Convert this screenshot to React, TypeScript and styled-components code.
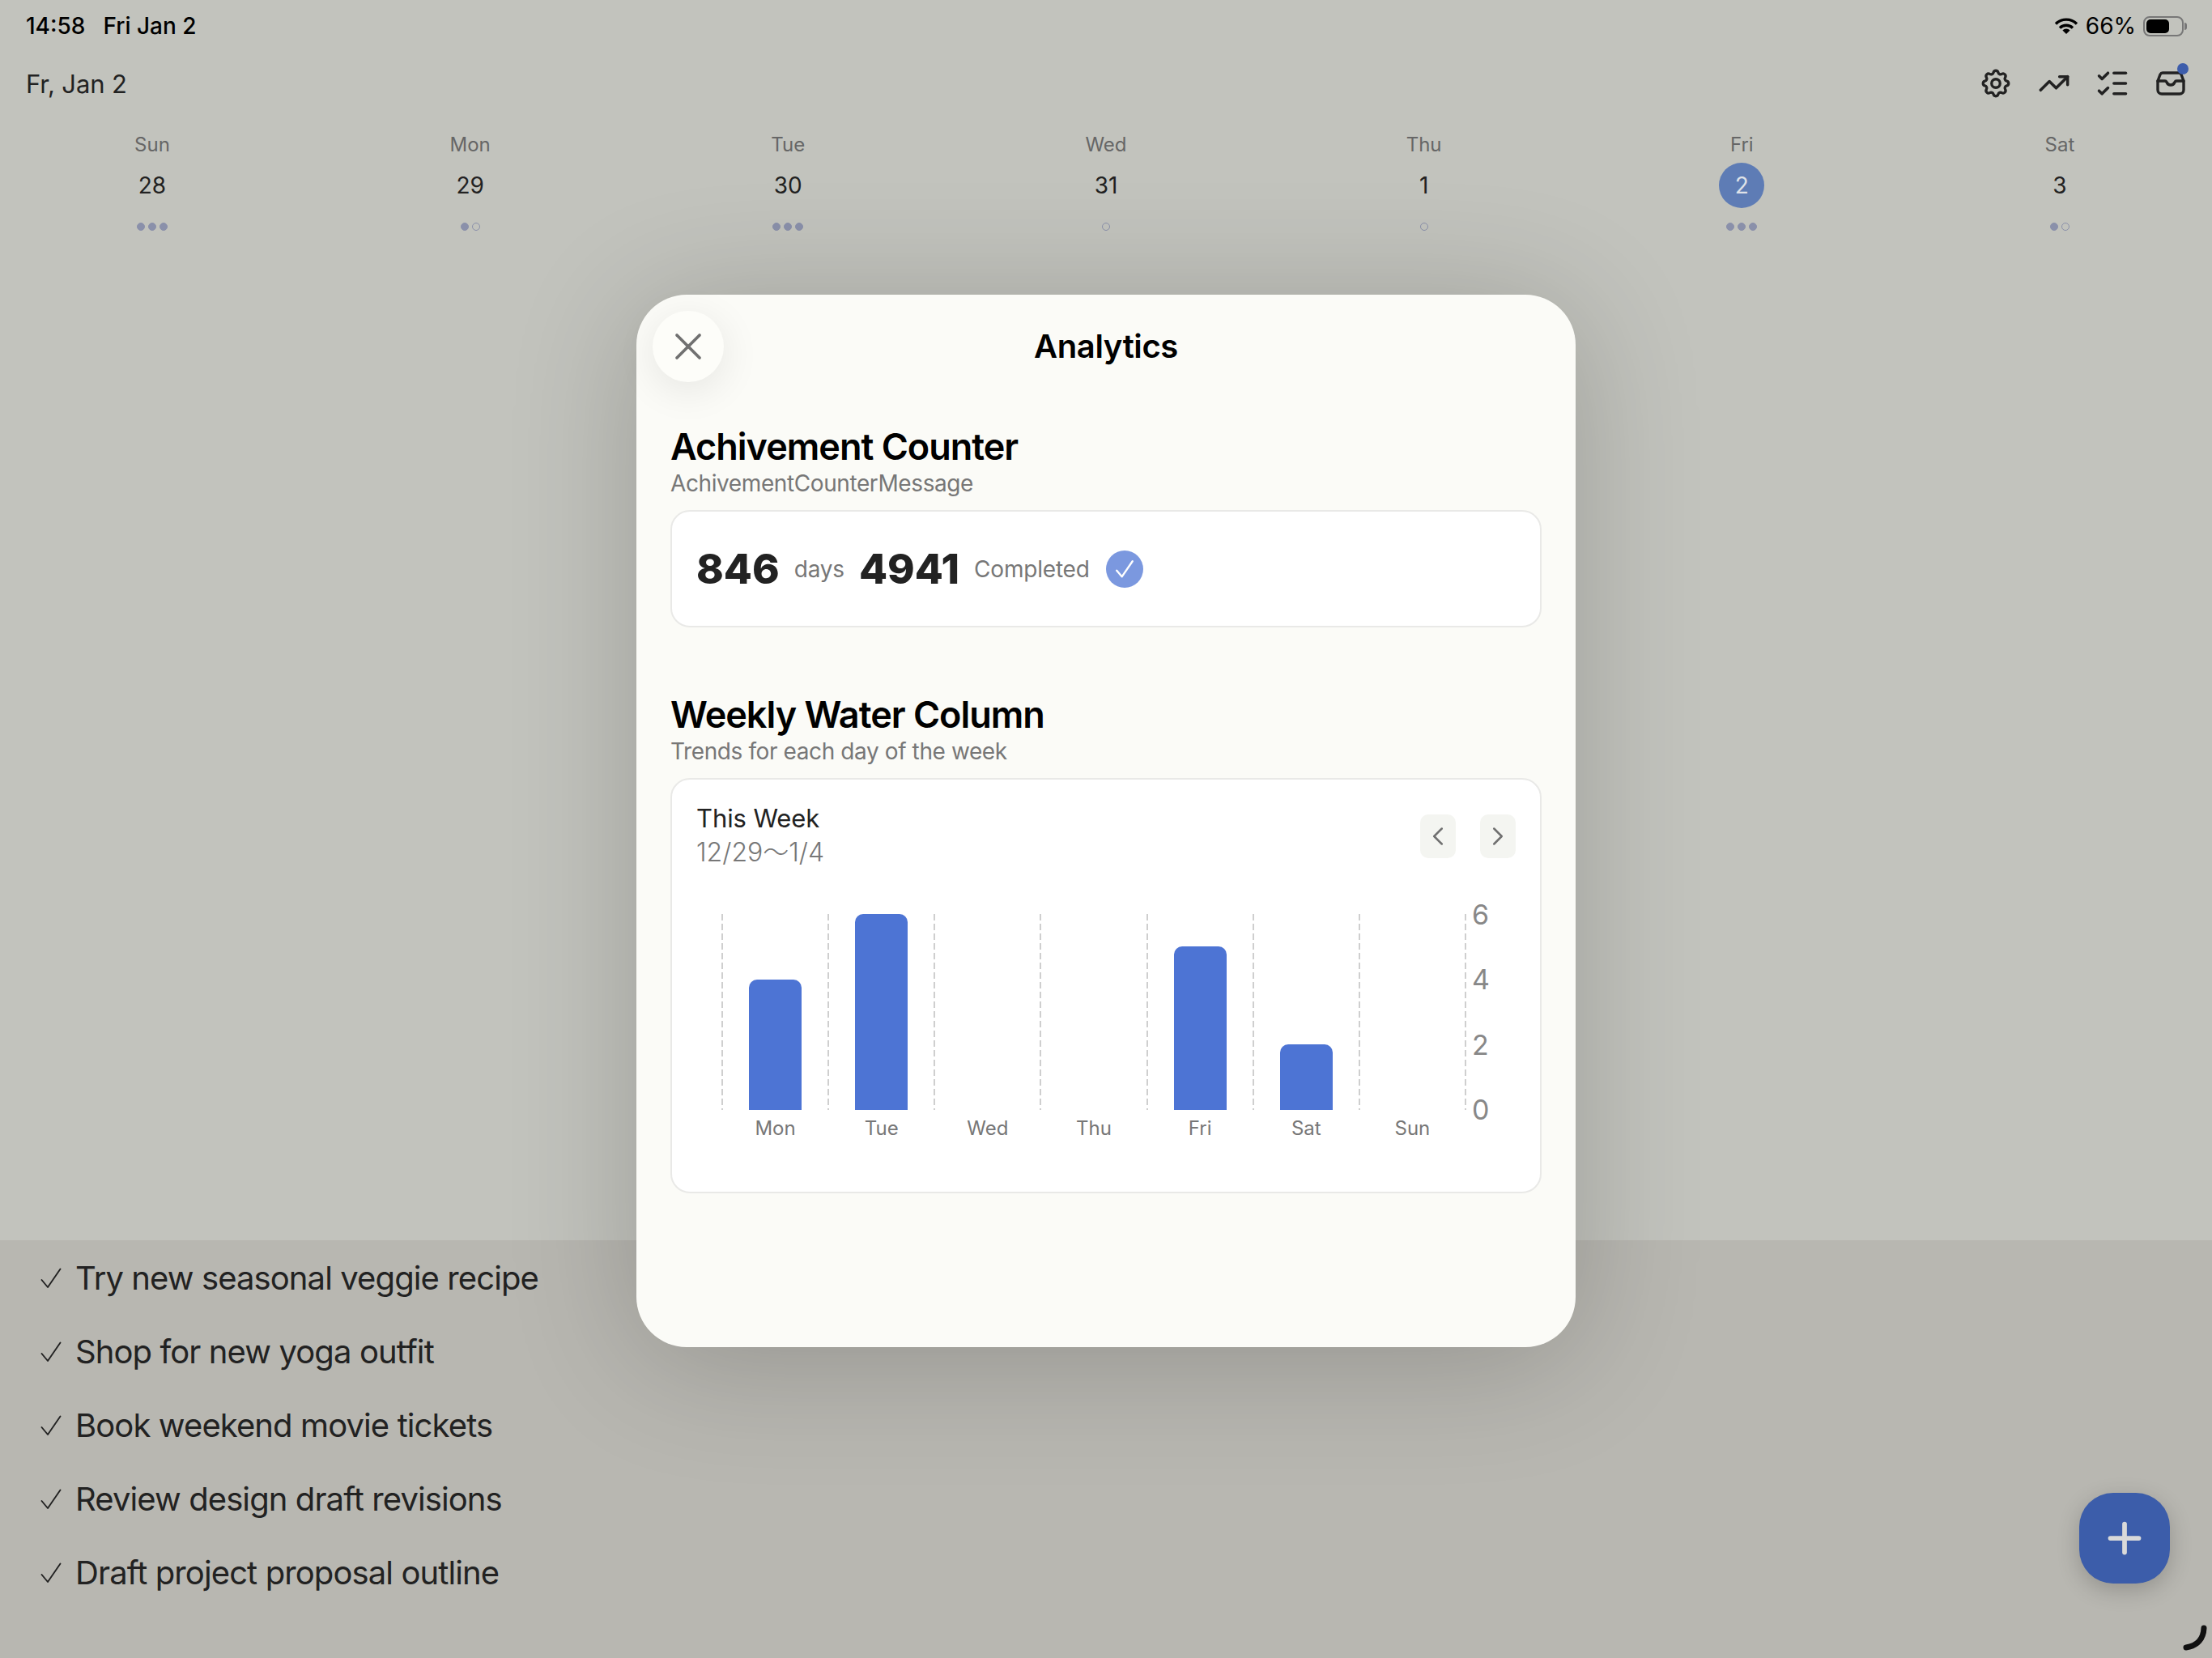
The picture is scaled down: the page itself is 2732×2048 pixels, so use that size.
import React from "react";
import styled, { createGlobalStyle } from "styled-components";
import { ChevronLeft, ChevronRight, ListChecks, Plus, TrendingUp, X } from "lucide-react";
import { TbSettings } from "react-icons/tb";

const GlobalStyle = createGlobalStyle`
  html, body {
    margin: 0;
    padding: 0;
    background: #c2c3bd;
  }
  * {
    box-sizing: border-box;
  }
`;

const days = [
  { name: "Sun", date: "28", dots: [1, 1, 1] },
  { name: "Mon", date: "29", dots: [1, 0] },
  { name: "Tue", date: "30", dots: [1, 1, 1] },
  { name: "Wed", date: "31", dots: [0] },
  { name: "Thu", date: "1", dots: [0] },
  { name: "Fri", date: "2", dots: [1, 1, 1], today: true },
  { name: "Sat", date: "3", dots: [1, 0] },
];

const tasks = [
  "Try new seasonal veggie recipe",
  "Shop for new yoga outfit",
  "Book weekend movie tickets",
  "Review design draft revisions",
  "Draft project proposal outline",
];

const weekly = [
  { day: "Mon", value: 4 },
  { day: "Tue", value: 6 },
  { day: "Wed", value: 0 },
  { day: "Thu", value: 0 },
  { day: "Fri", value: 5 },
  { day: "Sat", value: 2 },
  { day: "Sun", value: 0 },
];

function Tick({ size, color, weight }: { size: number; color: string; weight: number }) {
  return (
    <svg width={size} height={size} viewBox="0 0 26 26" fill="none" stroke={color} strokeWidth={weight} strokeLinecap="round" strokeLinejoin="round">
      <path d="M1.5 15L9 24L24.5 1.5" />
    </svg>
  );
}

export default function App() {
  return (
    <>
      <GlobalStyle />
      <PageStl>
        <TopAreaStl>
          <StatusBarStl>
            <StatusLeftStl>
              <span>14:58</span>
              <span>Fri Jan 2</span>
            </StatusLeftStl>
            <StatusRightStl>
              <svg width="30" height="22" viewBox="0 0 30 22" fill="none" stroke="#000" strokeWidth="3.4">
                <path d="M2 8.5a18.5 18.5 0 0 1 26 0" />
                <path d="M7 13.5a11.5 11.5 0 0 1 16 0" />
                <path d="M15 21l-4.6-4.6a6.5 6.5 0 0 1 9.2 0z" fill="#000" stroke="none" />
              </svg>
              <span>66%</span>
              <BatteryStl>
                <BatteryFillStl />
              </BatteryStl>
            </StatusRightStl>
          </StatusBarStl>

          <ToolbarStl>
            <DateTitleStl>Fr, Jan 2</DateTitleStl>
            <ToolIconsStl>
              <ToolSlotStl>
                <TbSettings size={42} strokeWidth={1.9} />
              </ToolSlotStl>
              <ToolSlotStl>
                <TrendingUp size={40} strokeWidth={2.1} />
              </ToolSlotStl>
              <ToolSlotStl>
                <ListChecks size={44} strokeWidth={1.9} />
              </ToolSlotStl>
              <ToolSlotStl>
                <InboxStl>
                  <svg width="36" height="32" viewBox="0 0 36 32" fill="none" stroke="#222" strokeWidth="3.4" strokeLinejoin="round" strokeLinecap="round">
                    <path d="M8 3H28Q30 3 31 5L34 13V24a5 5 0 0 1-5 5H7a5 5 0 0 1-5-5V13L5 5Q6 3 8 3Z" />
                    <path d="M2 13H11c1 0 1.5.5 2 1.5c1 2.5 3 3.5 5 3.5s4-1 5-3.5c.5-1 1-1.5 2-1.5H34" />
                  </svg>
                  <InboxBadgeStl />
                </InboxStl>
              </ToolSlotStl>
            </ToolIconsStl>
          </ToolbarStl>

          <WeekRowStl>
            {days.map((d) => (
              <DayStl key={d.name}>
                <DayNameStl>{d.name}</DayNameStl>
                <DayDateStl $today={d.today}>{d.date}</DayDateStl>
                <DotsStl>
                  {d.dots.map((on, i) => (
                    <DotStl key={i} $on={!!on} />
                  ))}
                </DotsStl>
              </DayStl>
            ))}
          </WeekRowStl>
        </TopAreaStl>

        <TaskListStl>
          {tasks.map((t) => (
            <TaskStl key={t}>
              <Tick size={26} color="#222" weight={1.9} />
              <span>{t}</span>
            </TaskStl>
          ))}
        </TaskListStl>

        <FabStl>
          <Plus size={60} strokeWidth={2.3} />
        </FabStl>
        <PencilMarkStl width="36" height="36" viewBox="0 0 36 36" fill="none">
          <path d="M31 5c-.5 13-8 22-22 24" stroke="#111" strokeWidth="7" strokeLinecap="round" />
        </PencilMarkStl>

        <OverlayStl>
          <ModalStl>
            <CloseStl>
              <X size={56} strokeWidth={1.6} />
            </CloseStl>
            <ModalHeaderStl>Analytics</ModalHeaderStl>

            <SectionStl>
              <SectionTitleStl>Achivement Counter</SectionTitleStl>
              <SectionSubStl>AchivementCounterMessage</SectionSubStl>
              <CounterCardStl>
                <BigNumberStl>846</BigNumberStl>
                <UnitStl>days</UnitStl>
                <BigNumberStl>4941</BigNumberStl>
                <UnitStl>Completed</UnitStl>
                <DoneBadgeStl>
                  <Tick size={22} color="#fff" weight={2.8} />
                </DoneBadgeStl>
              </CounterCardStl>
            </SectionStl>

            <SectionStl $gap={81}>
              <SectionTitleStl>Weekly Water Column</SectionTitleStl>
              <SectionSubStl>Trends for each day of the week</SectionSubStl>
              <ChartCardStl>
                <ChartHeadStl>
                  <div>
                    <WeekLabelStl>This Week</WeekLabelStl>
                    <WeekRangeStl>12/29〜1/4</WeekRangeStl>
                  </div>
                  <NavGroupStl>
                    <NavButtonStl>
                      <ChevronLeft size={38} strokeWidth={1.6} />
                    </NavButtonStl>
                    <NavButtonStl>
                      <ChevronRight size={38} strokeWidth={1.6} />
                    </NavButtonStl>
                  </NavGroupStl>
                </ChartHeadStl>

                <ChartStl>
                  <div>
                    <PlotStl>
                      {weekly.map((w) => (
                        <ColumnStl key={w.day}>
                          {w.value > 0 && <BarStl $value={w.value} />}
                        </ColumnStl>
                      ))}
                    </PlotStl>
                    <DayLabelsStl>
                      {weekly.map((w) => (
                        <span key={w.day}>{w.day}</span>
                      ))}
                    </DayLabelsStl>
                  </div>
                  <YAxisStl>
                    {[6, 4, 2, 0].map((n) => (
                      <YTickStl key={n}>{n}</YTickStl>
                    ))}
                  </YAxisStl>
                </ChartStl>
              </ChartCardStl>
            </SectionStl>
          </ModalStl>
        </OverlayStl>
      </PageStl>
    </>
  );
}

const PageStl = styled.div`
  position: relative;
  width: 2732px;
  height: 2048px;
  overflow: hidden;
  display: flex;
  flex-direction: column;
  background: #c2c3bd;
  font-family: Inter, "Noto Sans", sans-serif;
  color: #222;
`;

const TopAreaStl = styled.div`
  flex: 1;
`;

const StatusBarStl = styled.div`
  height: 64px;
  padding: 0 35px 0 32px;
  display: flex;
  align-items: center;
  justify-content: space-between;
  font-size: 28px;
  font-weight: 500;
  color: #000;
`;

const StatusLeftStl = styled.div`
  display: flex;
  gap: 22px;
`;

const StatusRightStl = styled.div`
  display: flex;
  align-items: center;
  gap: 9px;
  font-weight: 400;
  font-size: 28px;
`;

const BatteryStl = styled.div`
  position: relative;
  width: 50px;
  height: 25px;
  border: 2px solid #777;
  border-radius: 8px;
  padding: 2px;

  &::after {
    content: "";
    position: absolute;
    right: -6px;
    top: 6px;
    width: 3px;
    height: 9px;
    background: #777;
    border-radius: 0 3px 3px 0;
  }
`;

const BatteryFillStl = styled.div`
  width: 28px;
  height: 100%;
  background: #000;
  border-radius: 5px;
`;

const ToolbarStl = styled.div`
  height: 78px;
  padding: 0 15px 0 32px;
  display: flex;
  align-items: center;
  justify-content: space-between;
`;

const DateTitleStl = styled.div`
  font-size: 31px;
  letter-spacing: -0.1px;
`;

const ToolIconsStl = styled.div`
  display: flex;
  align-items: center;
  color: #222;
`;

const ToolSlotStl = styled.div`
  width: 72px;
  display: flex;
  justify-content: center;
`;

const InboxStl = styled.div`
  position: relative;
  display: flex;
`;

const InboxBadgeStl = styled.span`
  position: absolute;
  top: -9px;
  right: -4px;
  width: 14px;
  height: 14px;
  border-radius: 50%;
  background: #3d5dab;
`;

const WeekRowStl = styled.div`
  display: flex;
  justify-content: space-between;
  padding: 0 138px;
  margin-top: 22px;
`;

const DayStl = styled.div`
  width: 100px;
  display: flex;
  flex-direction: column;
  align-items: center;
`;

const DayNameStl = styled.div`
  height: 30px;
  line-height: 30px;
  font-size: 24px;
  color: #666;
`;

const DayDateStl = styled.div<{ $today?: boolean }>`
  width: 56px;
  height: 56px;
  margin-top: 7px;
  border-radius: 50%;
  display: flex;
  align-items: center;
  justify-content: center;
  font-size: 28px;
  color: ${(p) => (p.$today ? "#dfe2e8" : "#222")};
  background: ${(p) => (p.$today ? "#5e7cb5" : "transparent")};
`;

const DotsStl = styled.div`
  display: flex;
  gap: 4px;
  margin-top: 18px;
`;

const DotStl = styled.span<{ $on: boolean }>`
  width: 10px;
  height: 10px;
  border-radius: 50%;
  background: ${(p) => (p.$on ? "#8a90aa" : "transparent")};
  border: 1.5px solid #8a90aa;
`;

const TaskListStl = styled.div`
  height: 516px;
  padding: 1px 0 0 50px;
  background: #b8b7b1;
`;

const TaskStl = styled.div`
  height: 91px;
  display: flex;
  align-items: center;
  gap: 17px;
  font-size: 40px;
  letter-spacing: -0.9px;
  color: #222;
`;

const FabStl = styled.div`
  position: absolute;
  left: 2568px;
  top: 1844px;
  width: 112px;
  height: 112px;
  border-radius: 42px;
  background: #3c5daa;
  color: #d9d9d9;
  display: flex;
  align-items: center;
  justify-content: center;
  box-shadow: 0 8px 28px rgba(0, 0, 0, 0.2);
`;

const PencilMarkStl = styled.svg`
  position: absolute;
  left: 2691px;
  top: 2006px;
`;

const OverlayStl = styled.div`
  position: absolute;
  inset: 0;
  display: flex;
  justify-content: center;
  align-items: flex-start;
  padding-top: 364px;
`;

const ModalStl = styled.div`
  position: relative;
  width: 1160px;
  height: 1300px;
  padding: 0 42px;
  border-radius: 62px;
  background: #fbfbf7;
  box-shadow: 0 16px 160px rgba(0, 0, 0, 0.2);
`;

const CloseStl = styled.div`
  position: absolute;
  left: 20px;
  top: 20px;
  width: 88px;
  height: 88px;
  border-radius: 50%;
  background: #fdfdf9;
  color: #707070;
  display: flex;
  align-items: center;
  justify-content: center;
  box-shadow: 0 10px 50px rgba(0, 0, 0, 0.09);
`;

const ModalHeaderStl = styled.div`
  height: 128px;
  line-height: 128px;
  text-align: center;
  font-size: 40px;
  font-weight: 600;
  letter-spacing: -0.4px;
  color: #000;
`;

const SectionStl = styled.section<{ $gap?: number }>`
  margin-top: ${(p) => p.$gap ?? 33}px;
`;

const SectionTitleStl = styled.div`
  height: 54px;
  line-height: 54px;
  font-size: 45px;
  font-weight: 600;
  letter-spacing: -1px;
  color: #000;
`;

const SectionSubStl = styled.div`
  height: 36px;
  line-height: 36px;
  font-size: 28px;
  letter-spacing: -0.4px;
  color: #777;
`;

const CounterCardStl = styled.div`
  margin-top: 15px;
  height: 145px;
  padding: 0 30px;
  display: flex;
  align-items: center;
  background: #fff;
  border: 2px solid #e9e9e7;
  border-radius: 24px;
`;

const BigNumberStl = styled.span`
  font-size: 51px;
  font-weight: 800;
  color: #222;
  margin-right: 18px;
`;

const UnitStl = styled.span`
  font-size: 28px;
  letter-spacing: -0.2px;
  color: #777;
  margin-right: 18px;
`;

const DoneBadgeStl = styled.span`
  width: 46px;
  height: 46px;
  margin-left: 2px;
  border-radius: 50%;
  background: #7b98df;
  display: flex;
  align-items: center;
  justify-content: center;
`;

const ChartCardStl = styled.div`
  margin-top: 15px;
  height: 513px;
  padding: 28px 30px;
  background: #fff;
  border: 2px solid #e9e9e7;
  border-radius: 24px;
`;

const ChartHeadStl = styled.div`
  height: 84px;
  display: flex;
  align-items: center;
  justify-content: space-between;
`;

const WeekLabelStl = styled.div`
  height: 40px;
  line-height: 40px;
  font-size: 31px;
  letter-spacing: -0.1px;
  color: #222;
`;

const WeekRangeStl = styled.div`
  height: 44px;
  line-height: 44px;
  font-size: 32px;
  font-weight: 300;
  color: #777;
  font-family: Inter, "Noto Sans CJK JP", sans-serif;
`;

const NavGroupStl = styled.div`
  display: flex;
  gap: 30px;
`;

const NavButtonStl = styled.div`
  width: 44px;
  height: 54px;
  border-radius: 10px;
  background: #f4f5f1;
  color: #707070;
  display: flex;
  align-items: center;
  justify-content: center;
`;

const ChartStl = styled.div`
  margin: 54px 0 0 32px;
  display: flex;
`;

const PlotStl = styled.div`
  position: relative;
  width: 918px;
  height: 242px;
  display: grid;
  grid-template-columns: repeat(7, 1fr);

  &::after {
    content: "";
    position: absolute;
    right: -1px;
    top: 0;
    bottom: 0;
    width: 2px;
    background: repeating-linear-gradient(#cfcfcf 0 8px, transparent 8px 12px);
  }
`;

const ColumnStl = styled.div`
  position: relative;
  display: flex;
  align-items: flex-end;
  justify-content: center;

  &::before {
    content: "";
    position: absolute;
    left: -1px;
    top: 0;
    bottom: 0;
    width: 2px;
    background: repeating-linear-gradient(#cfcfcf 0 8px, transparent 8px 12px);
  }
`;

const BarStl = styled.div<{ $value: number }>`
  width: 65px;
  height: ${(p) => (p.$value * 242) / 6}px;
  background: #4d74d4;
  border-radius: 10px 10px 0 0;
`;

const DayLabelsStl = styled.div`
  display: grid;
  grid-template-columns: repeat(7, 1fr);
  margin-top: 8px;
  height: 30px;
  line-height: 30px;
  text-align: center;
  font-size: 24px;
  color: #777;
`;

const YAxisStl = styled.div`
  height: 242px;
  margin-left: 8px;
  display: flex;
  flex-direction: column;
  justify-content: space-between;
`;

const YTickStl = styled.div`
  height: 0;
  display: flex;
  align-items: center;
  font-size: 34px;
  color: #888;
`;
